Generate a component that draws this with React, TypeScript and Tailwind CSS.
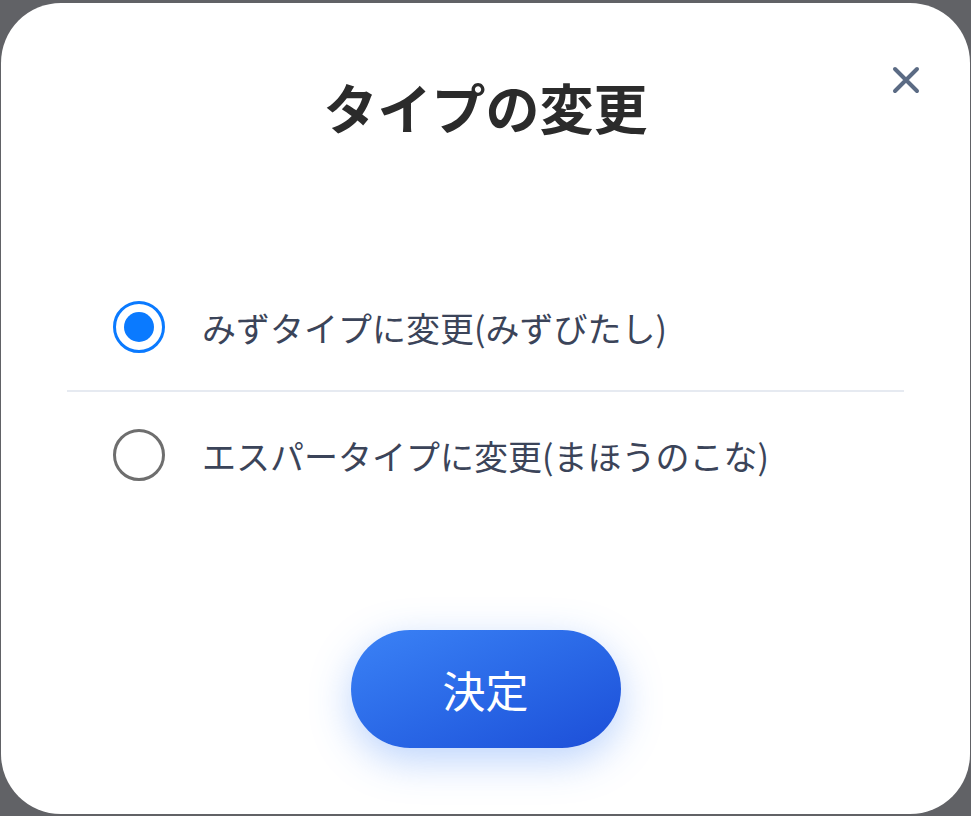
import { useState } from "react";

const options = [
  { id: "water", label: "みずタイプに変更(みずびたし)" },
  { id: "psychic", label: "エスパータイプに変更(まほうのこな)" },
];

function Radio({ checked }: { checked: boolean }) {
  return (
    <span
      className={`flex h-[52px] w-[52px] shrink-0 items-center justify-center rounded-full border-[3px] ${
        checked ? "border-[#0a7aff]" : "border-[#6e6e6e]"
      }`}
    >
      {checked && <span className="h-[30px] w-[30px] rounded-full bg-[#0a7aff]" />}
    </span>
  );
}

export default function App() {
  const [selected, setSelected] = useState("water");

  return (
    <div
      className="h-[816px] w-full bg-[#616266] pt-[3px] pb-[2px] px-[1px]"
      style={{ fontFamily: '"Noto Sans CJK JP", "Noto Sans", sans-serif' }}
    >
      <div className="relative flex h-full flex-col rounded-[60px] bg-white">
        <button className="absolute right-[48px] top-[61px] text-[#5b6b84]" aria-label="close">
          <svg width="32" height="32" viewBox="0 0 32 32" fill="none" stroke="currentColor" strokeWidth="4" strokeLinecap="round">
            <path d="M5 5 L27 27 M27 5 L5 27" />
          </svg>
        </button>

        <h1 className="pt-[77px] text-center text-[54px] font-bold leading-none text-[#2b2b2b]">
          タイプの変更
        </h1>

        <ul className="mx-[66px] mt-[130px]">
          {options.map((o, i) => (
            <li key={o.id} className={i > 0 ? "border-t-2 border-[#e6eaf1]" : ""}>
              <label
                className="flex h-[126px] cursor-pointer items-center gap-[37px] pl-[46px]"
                onClick={() => setSelected(o.id)}
              >
                <Radio checked={selected === o.id} />
                <span className="text-[34px] text-[#3b4459]">{o.label}</span>
              </label>
            </li>
          ))}
        </ul>

        <div className="mt-auto flex justify-center pb-[66px]">
          <button className="h-[118px] w-[270px] rounded-full bg-gradient-to-br from-[#3b82f6] to-[#1d4ed8] text-[43px] leading-none text-white shadow-[0_12px_40px_rgba(59,130,246,0.35)]">
            決定
          </button>
        </div>
      </div>
    </div>
  );
}
